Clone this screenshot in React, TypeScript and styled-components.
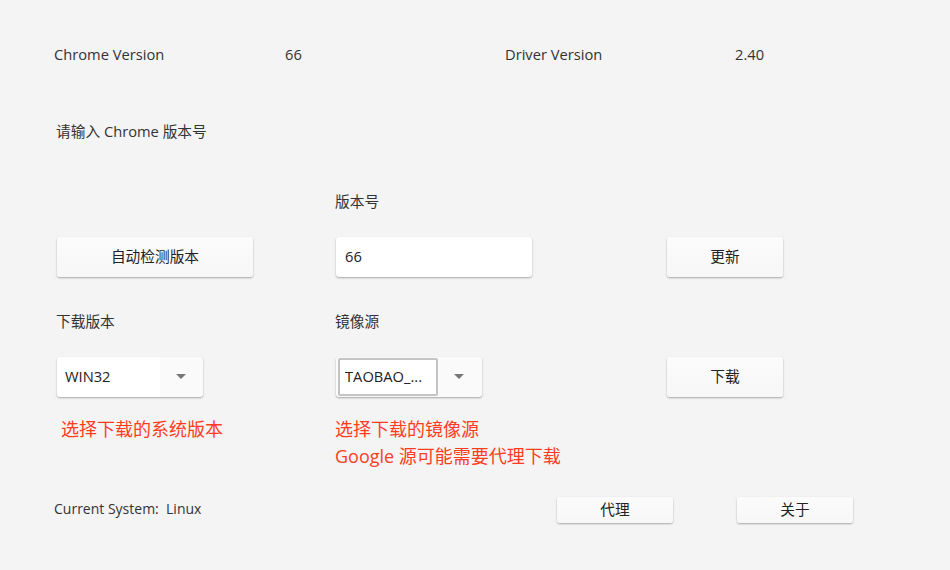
import React from "react";
import styled, { createGlobalStyle } from "styled-components";

const FS = "14.7px";

const Global = createGlobalStyle`
  html, body { margin: 0; padding: 0; background: #f4f4f4; }
  body {
    font-family: "Open Sans", "Noto Sans", "Noto Sans CJK SC", sans-serif;
    color: #333;
    font-size: ${FS};
  }
`;

const Page = styled.div`
  width: 950px;
  height: 570px;
  box-sizing: border-box;
  padding: 44px 0 0 0;
  background: #f4f4f4;
  display: flex;
  flex-direction: column;
`;

const InfoRow = styled.div`
  display: grid;
  grid-template-columns: 231px 220px 230px 1fr;
  padding-left: 54px;
  line-height: 20px;
  font-size: ${FS};
`;

const Prompt = styled.div`
  margin: 57px 0 0 56px;
  line-height: 20px;
  font-size: ${FS};
`;

const Form = styled.div`
  display: grid;
  grid-template-columns: 279px 331px 150px;
  padding-left: 57px;
  margin-top: 50px;
  align-items: start;
`;

const Label = styled.div<{ $dx?: number }>`
  line-height: 20px;
  font-size: ${FS};
  margin-left: ${(p) => p.$dx ?? -1}px;
`;

const Spacer = styled.div``;

const Gap = styled.div<{ $h: number }>`
  grid-column: 1 / -1;
  height: ${(p) => p.$h}px;
`;

const Button = styled.button<{ $w: number; $h: number }>`
  width: ${(p) => p.$w}px;
  height: ${(p) => p.$h}px;
  border: none;
  border-radius: 3px;
  background: linear-gradient(#fbfbfb, #f7f7f7);
  box-shadow: 0 1px 2px rgba(0, 0, 0, 0.32);
  font-family: "Open Sans", "Noto Sans", "Noto Sans CJK SC", sans-serif;
  font-size: ${FS};
  line-height: 18px;
  color: #222;
  padding: 0 0 2px 0;
  margin: 0;
  cursor: pointer;
`;

const TextBox = styled.div`
  width: 196px;
  height: 40px;
  box-sizing: border-box;
  background: #fff;
  border-radius: 3px;
  box-shadow: 0 1px 2px rgba(0, 0, 0, 0.32);
  display: flex;
  align-items: center;
  padding: 0 0 2px 9px;
  font-size: ${FS};
  color: #222;
`;

const Combo = styled.div`
  width: 146px;
  height: 40px;
  border-radius: 3px;
  background: #fafafa;
  box-shadow: 0 1px 2px rgba(0, 0, 0, 0.32);
  display: flex;
  overflow: hidden;
`;

const ComboValue = styled.div<{ $focused?: boolean }>`
  width: 103px;
  height: 40px;
  box-sizing: border-box;
  background: #fff;
  display: flex;
  align-items: center;
  font-size: ${FS};
  color: #222;
  padding: 0 0 2px 8px;
  ${(p) =>
    p.$focused &&
    `
    width: 100px;
    height: 38px;
    margin: 1px 0 0 2px;
    border: 2px solid #c4c4c4;
    border-radius: 2px;
    padding-left: 5px;
  `}
`;

const ArrowCell = styled.div`
  flex: 1;
  display: flex;
  align-items: center;
  justify-content: center;
  padding: 0 2px 2px 0;
`;

const Arrow = styled.div`
  width: 0;
  height: 0;
  border-left: 5px solid transparent;
  border-right: 5px solid transparent;
  border-top: 5px solid #777;
`;

const Hint = styled.div<{ $dx?: number }>`
  color: #ff3c1e;
  font-size: 18px;
  line-height: 27px;
  margin-left: ${(p) => p.$dx ?? 0}px;
`;

const Footer = styled.div`
  display: flex;
  align-items: center;
  margin-top: 27px;
  padding-left: 54px;
  height: 26px;
`;

const SystemText = styled.div`
  width: 503px;
  font-size: 14px;
  line-height: 20px;
  white-space: pre;
  padding-bottom: 2px;
`;

const FooterButtons = styled.div`
  display: flex;
  gap: 64px;
`;

export default function App() {
  return (
    <>
      <Global />
      <Page>
        <InfoRow>
          <span>Chrome Version</span>
          <span>66</span>
          <span>Driver Version</span>
          <span>2.40</span>
        </InfoRow>
        <Prompt>请输入 Chrome 版本号</Prompt>
        <Form>
          <Spacer />
          <Label>版本号</Label>
          <Spacer />
          <Gap $h={26} />
          <Button $w={196} $h={40}>自动检测版本</Button>
          <TextBox>66</TextBox>
          <Button $w={116} $h={40}>更新</Button>
          <Gap $h={34} />
          <Label>下载版本</Label>
          <Label>镜像源</Label>
          <Spacer />
          <Gap $h={26} />
          <Combo>
            <ComboValue>WIN32</ComboValue>
            <ArrowCell>
              <Arrow />
            </ArrowCell>
          </Combo>
          <Combo>
            <ComboValue $focused>TAOBAO_...</ComboValue>
            <ArrowCell>
              <Arrow />
            </ArrowCell>
          </Combo>
          <Button $w={116} $h={40}>下载</Button>
          <Gap $h={19} />
          <Hint $dx={4}>选择下载的系统版本</Hint>
          <Hint $dx={-1}>
            选择下载的镜像源
            <br />
            Google 源可能需要代理下载
          </Hint>
          <Spacer />
        </Form>
        <Footer>
          <SystemText>Current System:  Linux</SystemText>
          <FooterButtons>
            <Button $w={116} $h={26}>代理</Button>
            <Button $w={116} $h={26}>关于</Button>
          </FooterButtons>
        </Footer>
      </Page>
    </>
  );
}
